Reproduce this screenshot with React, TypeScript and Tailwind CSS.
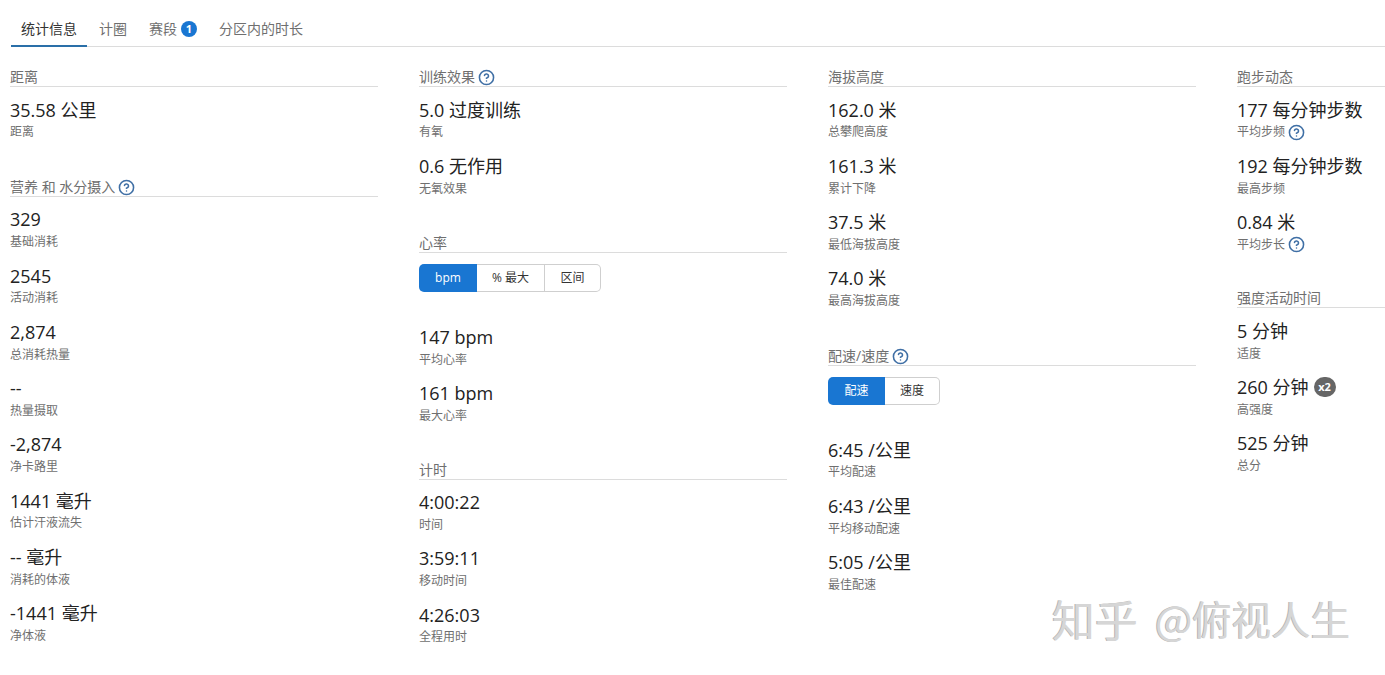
import { CircleHelp } from 'lucide-react'
import type { ReactNode } from 'react'

const sans = 'font-["Open_Sans","Noto_Sans_CJK_SC",sans-serif]'

function Help() {
  return <CircleHelp className="w-[17px] h-[17px] text-[#3f6fa5] shrink-0" strokeWidth={2.2} />
}

function Section({
  title,
  help,
  className = 'mb-[26px]',
  children,
}: {
  title: string
  help?: boolean
  className?: string
  children: ReactNode
}) {
  return (
    <section className={className}>
      <h3 className="flex items-start gap-[3px] h-[18px] mb-[8.5px] border-b border-[#dcdcdc] text-sm leading-[16px] font-normal text-[#6f6f6f]">
        {title}
        {help && <Help />}
      </h3>
      {children}
    </section>
  )
}

function Stat({ value, label, help, badge }: { value: string; label: string; help?: boolean; badge?: boolean }) {
  return (
    <div className="h-[56.25px]">
      <div className="flex items-center gap-[5px] h-[28px] text-lg leading-[28px] text-[#222]">
        {value}
        {badge && (
          <span className="w-[22px] h-[20px] rounded-full bg-[#666] text-white text-[11px] leading-[20px] font-bold text-center">
            x2
          </span>
        )}
      </div>
      <div className="flex items-center gap-[3px] h-[16px] mt-[0.75px] text-xs leading-[16px] text-[#6f6f6f]">
        {label}
        {help && <Help />}
      </div>
    </div>
  )
}

function Toggle({ options }: { options: { label: string; width: string }[] }) {
  return (
    <div className="flex w-fit h-[28px] mt-[11px] mb-[31px] text-xs text-[#333]">
      {options.map((o, i) => (
        <div
          key={o.label}
          className={`flex items-center justify-center ${o.width} ${
            i === 0
              ? 'bg-[#1976d2] text-white rounded-l-[5px]'
              : 'border-y border-r border-[#cfcfcf] last:rounded-r-[5px]'
          }`}
        >
          {o.label}
        </div>
      ))}
    </div>
  )
}

export default function App() {
  return (
    <div className={`relative w-[1385px] h-[675px] overflow-hidden bg-white ${sans}`}>
      <nav className="flex gap-[2px] h-[47px] pt-[12px] ml-[11px] border-b border-[#dcdcdc] text-sm text-[#6f6f6f]">
        <div className="flex items-start h-[35px] px-[10px] pt-[5px] leading-[24px] text-[#333] border-b-2 border-[#2a6fa8]">统计信息</div>
        <div className="flex items-start h-[35px] px-[10px] pt-[5px] leading-[24px]">计圈</div>
        <div className="flex items-start gap-[4px] h-[35px] px-[10px] pt-[5px] leading-[24px]">
          赛段
          <span className="mt-[4px] w-[16px] h-[16px] rounded-full bg-[#1976d2] text-white text-[11px] leading-[16px] font-bold text-center">1</span>
        </div>
        <div className="flex items-start h-[35px] px-[10px] pt-[5px] leading-[24px]">分区内的时长</div>
      </nav>

      <div className="flex gap-[41px] pl-[10px] pt-[22px]">
        <div className="w-[368px] shrink-0">
          <Section title="距离" className="mb-[27px]">
            <Stat value="35.58 公里" label="距离" />
          </Section>
          <Section title="营养 和 水分摄入" help>
            <Stat value="329" label="基础消耗" />
            <Stat value="2545" label="活动消耗" />
            <Stat value="2,874" label="总消耗热量" />
            <Stat value="--" label="热量摄取" />
            <Stat value="-2,874" label="净卡路里" />
            <Stat value="1441 毫升" label="估计汗液流失" />
            <Stat value="-- 毫升" label="消耗的体液" />
            <Stat value="-1441 毫升" label="净体液" />
          </Section>
        </div>

        <div className="w-[368px] shrink-0">
          <Section title="训练效果" help className="mb-[27px]">
            <Stat value="5.0 过度训练" label="有氧" />
            <Stat value="0.6 无作用" label="无氧效果" />
          </Section>
          <Section title="心率">
            <Toggle
              options={[
                { label: 'bpm', width: 'w-[58px]' },
                { label: '% 最大', width: 'w-[68px]' },
                { label: '区间', width: 'w-[56px]' },
              ]}
            />
            <Stat value="147 bpm" label="平均心率" />
            <Stat value="161 bpm" label="最大心率" />
          </Section>
          <Section title="计时">
            <Stat value="4:00:22" label="时间" />
            <Stat value="3:59:11" label="移动时间" />
            <Stat value="4:26:03" label="全程用时" />
          </Section>
        </div>

        <div className="w-[368px] shrink-0">
          <Section title="海拔高度" className="mb-[27px]">
            <Stat value="162.0 米" label="总攀爬高度" />
            <Stat value="161.3 米" label="累计下降" />
            <Stat value="37.5 米" label="最低海拔高度" />
            <Stat value="74.0 米" label="最高海拔高度" />
          </Section>
          <Section title="配速/速度" help>
            <Toggle
              options={[
                { label: '配速', width: 'w-[57px]' },
                { label: '速度', width: 'w-[55px]' },
              ]}
            />
            <Stat value="6:45 /公里" label="平均配速" />
            <Stat value="6:43 /公里" label="平均移动配速" />
            <Stat value="5:05 /公里" label="最佳配速" />
          </Section>
        </div>

        <div className="w-[368px] shrink-0">
          <Section title="跑步动态">
            <Stat value="177 每分钟步数" label="平均步频" help />
            <Stat value="192 每分钟步数" label="最高步频" />
            <Stat value="0.84 米" label="平均步长" help />
          </Section>
          <Section title="强度活动时间">
            <Stat value="5 分钟" label="适度" />
            <Stat value="260 分钟" label="高强度" badge />
            <Stat value="525 分钟" label="总分" />
          </Section>
        </div>
      </div>

      {/* zhihu watermark */}
      <div className="absolute left-[1052px] top-[594px] flex items-center gap-[17px] whitespace-pre leading-[48px] font-['Noto_Sans_CJK_SC',sans-serif] text-[#d6d6d6] [text-shadow:-1px_0_0_#b4b4b4]">
        <span className="text-[43px]">知乎</span>
        <span className="text-[39.5px]">@俯视人生</span>
      </div>
    </div>
  )
}
